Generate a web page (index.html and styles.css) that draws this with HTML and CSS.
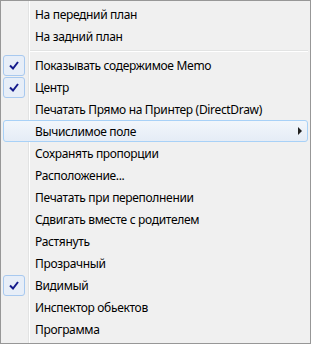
FILE: index.html
```html
<!DOCTYPE html>
<html lang="ru">
<head>
  <meta charset="UTF-8">
  <title>Меню</title>
  <link rel="stylesheet" href="styles.css">
</head>
<body>
  <div class="menu">
    <div class="item"><span class="gutter"></span><span class="label">На передний план</span></div>
    <div class="item"><span class="gutter"></span><span class="label">На задний план</span></div>
    <div class="sep"></div>
    <div class="item"><span class="gutter checked"><svg width="10" height="9" viewBox="0 0 10 9"><path d="M1 4.5 L4 7.5 L9 1" fill="none" stroke="#141a8c" stroke-width="2"/></svg></span><span class="label">Показывать содержимое Memo</span></div>
    <div class="item"><span class="gutter checked"><svg width="10" height="9" viewBox="0 0 10 9"><path d="M1 4.5 L4 7.5 L9 1" fill="none" stroke="#141a8c" stroke-width="2"/></svg></span><span class="label">Центр</span></div>
    <div class="item"><span class="gutter"></span><span class="label">Печатать Прямо на Принтер (DirectDraw)</span></div>
    <div class="item hover"><span class="gutter"></span><span class="label">Вычислимое поле</span><span class="arrow"></span></div>
    <div class="item"><span class="gutter"></span><span class="label">Сохранять пропорции</span></div>
    <div class="item"><span class="gutter"></span><span class="label">Расположение...</span></div>
    <div class="item"><span class="gutter"></span><span class="label">Печатать при переполнении</span></div>
    <div class="item"><span class="gutter"></span><span class="label">Сдвигать вместе с родителем</span></div>
    <div class="item"><span class="gutter"></span><span class="label">Растянуть</span></div>
    <div class="item"><span class="gutter"></span><span class="label">Прозрачный</span></div>
    <div class="item"><span class="gutter checked"><svg width="10" height="9" viewBox="0 0 10 9"><path d="M1 4.5 L4 7.5 L9 1" fill="none" stroke="#141a8c" stroke-width="2"/></svg></span><span class="label">Видимый</span></div>
    <div class="item"><span class="gutter"></span><span class="label">Инспектор обьектов</span></div>
    <div class="item"><span class="gutter"></span><span class="label">Программа</span></div>
  </div>
</body>
</html>
```

FILE: styles.css
```css
* { margin: 0; padding: 0; box-sizing: border-box; }
body { background: #f0f0f0; }
.menu {
  width: 311px;
  height: 344px;
  border: 1px solid #979797;
  padding: 2px;
  background:
    linear-gradient(to right, #e2e3e3 0 1px, #fff 1px 2px) 27px 0 / 2px 100% no-repeat,
    #f0f0f0;
  font-family: "Noto Sans", sans-serif;
  font-size: 12px;
  letter-spacing: -0.33px;
  color: #000;
}
.item {
  height: 22px;
  display: flex;
  align-items: center;
  border: 1px solid transparent;
  border-radius: 3px;
}
.gutter {
  width: 22px;
  height: 21px;
  margin-left: -1px;
  flex: none;
  display: flex;
  align-items: center;
  justify-content: center;
}
.gutter.checked {
  border: 1px solid #a8c9ef;
  border-radius: 3px;
  background: #e7eef8;
}
.label { padding-left: 10px; flex: 1; white-space: nowrap; padding-top: 1px; }
.item.hover {
  border-color: #a8d1f7;
  background: linear-gradient(#f2f6fb, #e5ecf6);
}
.arrow {
  width: 0;
  height: 0;
  margin-right: 5px;
  border-left: 4px solid #202020;
  border-top: 4px solid transparent;
  border-bottom: 4px solid transparent;
}
.sep {
  height: 7px;
  margin-left: 27px;
  background: linear-gradient(#e2e3e3, #e2e3e3) 0 3px / 100% 1px no-repeat,
              linear-gradient(#fff, #fff) 0 4px / 100% 1px no-repeat;
}
```
